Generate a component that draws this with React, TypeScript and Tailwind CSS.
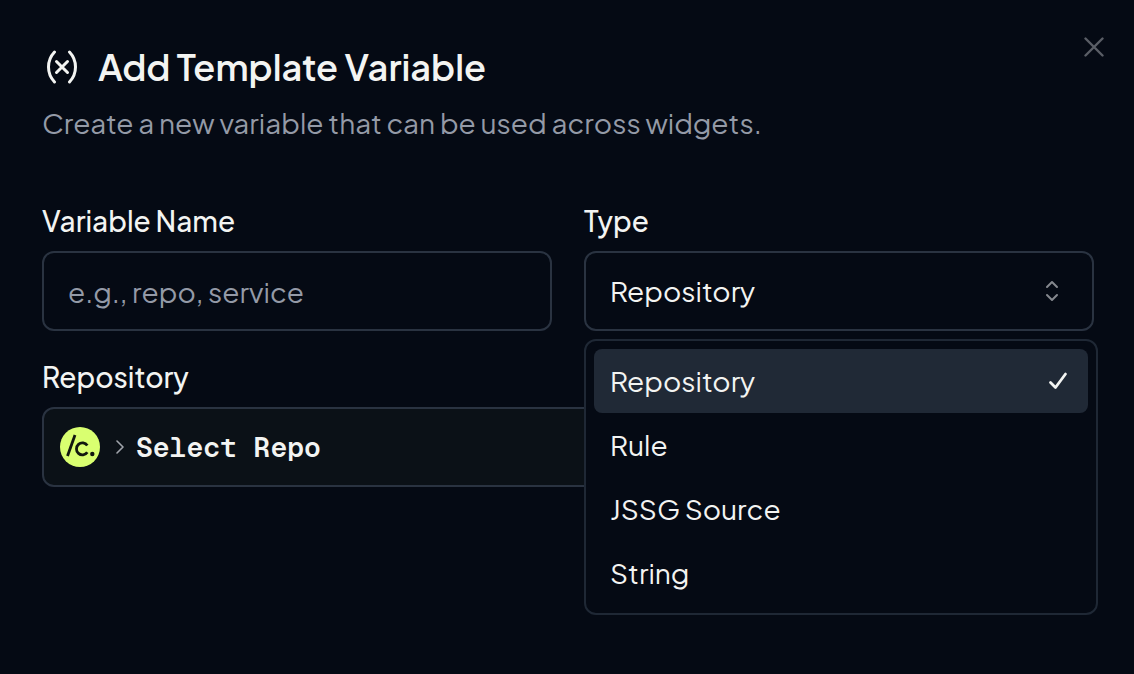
import React, { useState } from 'react';
import clsx from 'clsx';

const types = ['Repository', 'Rule', 'JSSG Source', 'String'];

const VariableIcon = () => (
  <svg width="32" height="34" viewBox="0 0 32 34" fill="none" stroke="currentColor" strokeWidth="3" strokeLinecap="round" aria-hidden="true">
    <path d="M8.500 2C.5 10.500 .5 23.500 8.500 32" />
    <path d="M23.500 2c8 8.500 8 21.500 0 30" />
    <path d="M10.500 11.500l11 11M21.500 11.500l-11 11" />
  </svg>
);

const CloseIcon = () => (
  <svg width="20" height="20" viewBox="0 0 20 20" fill="none" stroke="currentColor" strokeWidth="2.4" strokeLinecap="round" aria-hidden="true">
    <path d="M1.500 1.500l17 17M18.500 1.500l-17 17" />
  </svg>
);

const UpDownIcon = () => (
  <svg width="14" height="22" viewBox="0 0 14 22" fill="none" stroke="currentColor" strokeWidth="2" strokeLinecap="round" strokeLinejoin="round" aria-hidden="true">
    <path d="M2 7l5-5 5 5M2 15l5 5 5-5" />
  </svg>
);

const CheckIcon = () => (
  <svg width="20" height="18" viewBox="0 0 20 18" fill="none" stroke="currentColor" strokeWidth="2.8" strokeLinecap="round" strokeLinejoin="round" aria-hidden="true">
    <path d="M2.500 10.500l5 5L17.500 2" />
  </svg>
);

const RepoLogo = () => (
  <svg width="40" height="40" viewBox="0 0 40 40" fill="none" aria-hidden="true">
    <circle cx="20" cy="20" r="20" fill="#d9ff70" />
    <path d="M7.500 29L15 8" stroke="#11170f" strokeWidth="2.800" />
    <path d="M27.300 18.600a5.900 6 0 1 0 0 6.600" stroke="#11170f" strokeWidth="2.800" />
    <circle cx="32.300" cy="27" r="2.200" fill="#11170f" />
  </svg>
);

const App = () => {
  const [name, setName] = useState('');
  const [type, setType] = useState('Repository');
  const [open, setOpen] = useState(true);

  const selectType = (value: string) => {
    setType(value);
    setOpen(false);
  };

  return (
    <div
      role="dialog"
      aria-labelledby="dialog-title"
      className="relative min-h-screen bg-[#050a14] pt-[43px] pr-10 pb-10 pl-[42px] font-['Plus_Jakarta_Sans',Inter,sans-serif] text-[28px] leading-10 text-[#f3f4f2]"
    >
      <button aria-label="Close" className="absolute top-[37px] right-[30px] text-[#5a5e66]">
        <CloseIcon />
      </button>

      <header className="mb-[60px] flex flex-col gap-3">
        <div className="flex items-center gap-5 pl-1">
          <VariableIcon />
          <h1 id="dialog-title" className="text-4xl leading-12 font-semibold">Add Template Variable</h1>
        </div>
        <p className="text-[#949aa7]">Create a new variable that can be used across widgets.</p>
      </header>

      <form className="flex flex-col gap-7">
        <div className="grid grid-cols-2 gap-8">
          <div className="flex flex-col gap-3">
            <label htmlFor="variable-name" className="leading-9 font-medium">Variable Name</label>
            <input
              id="variable-name"
              value={name}
              onChange={(e) => setName(e.target.value)}
              placeholder="e.g., repo, service"
              className="h-20 w-full rounded-xl border-2 border-[#2a3341] bg-transparent px-6 outline-none placeholder:text-[#949aa7]"
            />
          </div>

          <div className="flex flex-col gap-3">
            <label htmlFor="variable-type" className="leading-9 font-medium">Type</label>
            <div className="relative">
              <select
                id="variable-type"
                value={type}
                onChange={(e) => setType(e.target.value)}
                onMouseDown={(e) => {
                  e.preventDefault();
                  setOpen(!open);
                }}
                className="h-20 w-full appearance-none rounded-xl border-2 border-[#2a3341] bg-[#050a14] px-6 outline-none"
              >
                {types.map((item) => (
                  <option key={item}>{item}</option>
                ))}
              </select>
              <span className="pointer-events-none absolute inset-y-0 right-[35px] flex items-center text-[#85888e]">
                <UpDownIcon />
              </span>

              {/* Type menu */}
              {open && (
                <div role="listbox" aria-label="Type" className="absolute top-full -right-1 left-0 z-10 mt-2 flex flex-col rounded-xl border-2 border-[#1f2835] bg-[#050a14] p-2">
                  {types.map((item) => (
                    <button
                      key={item}
                      type="button"
                      role="option"
                      aria-selected={item === type}
                      onClick={() => selectType(item)}
                      className={clsx(
                        'flex h-16 items-center justify-between rounded-lg px-4 text-left',
                        item === type ? 'bg-[#202936]' : 'hover:bg-[#202936]'
                      )}
                    >
                      {item}
                      {item === type && <span className="pr-1"><CheckIcon /></span>}
                    </button>
                  ))}
                </div>
              )}
            </div>
          </div>
        </div>

        <div className="flex flex-col gap-3">
          <label htmlFor="repository" className="leading-9 font-medium">Repository</label>
          <button
            id="repository"
            type="button"
            className="flex h-20 w-full items-center rounded-xl border-2 border-[#2a3341] bg-[#0b1117] px-4 font-['Geist_Mono','JetBrains_Mono','Liberation_Mono',monospace] font-semibold"
          >
            <RepoLogo />
            <svg width="8" height="14" viewBox="0 0 8 14" fill="none" stroke="#a0a4ab" strokeWidth="1.600" strokeLinecap="round" strokeLinejoin="round" className="mr-3 ml-4" aria-hidden="true">
              <path d="M1 1l6 6-6 6" />
            </svg>
            Select Repo
          </button>
        </div>
      </form>
    </div>
  );
};

export default App;
